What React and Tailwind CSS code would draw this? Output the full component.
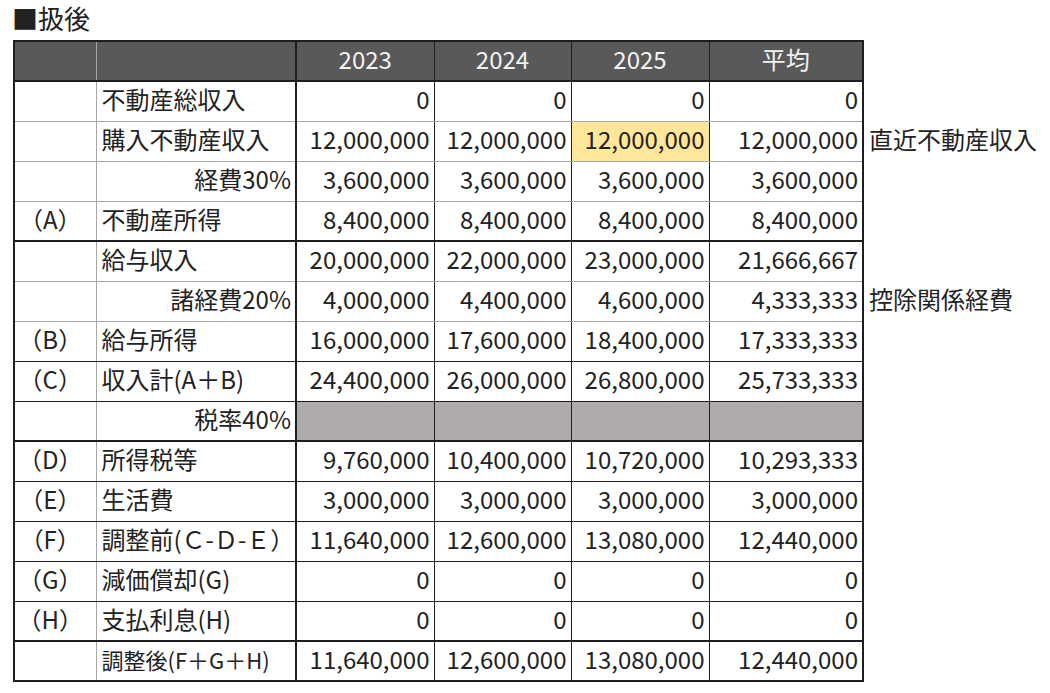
import React from "react";

const F = { fontFamily: '"Noto Sans CJK JP", "Noto Sans", sans-serif' };

const bottomCls = {
  gray: "border-b border-b-[#a6a6a6]",
  black: "border-b-[1.5px] border-b-[#1e1e1e]",
  thick: "border-b-2 border-b-[#1e1e1e]",
};

const rows = [
  { c0: "", label: "不動産総収入", vals: ["0", "0", "0", "0"], b: "gray" },
  { c0: "", label: "購入不動産収入", vals: ["12,000,000", "12,000,000", "12,000,000", "12,000,000"], hl: 2, note: "直近不動産収入", b: "gray" },
  { c0: "", label: "経費30%", right: true, vals: ["3,600,000", "3,600,000", "3,600,000", "3,600,000"], b: "gray" },
  { c0: "（A）", label: "不動産所得", vals: ["8,400,000", "8,400,000", "8,400,000", "8,400,000"], b: "thick" },
  { c0: "", label: "給与収入", vals: ["20,000,000", "22,000,000", "23,000,000", "21,666,667"], b: "gray" },
  { c0: "", label: "諸経費20%", right: true, vals: ["4,000,000", "4,400,000", "4,600,000", "4,333,333"], note: "控除関係経費", b: "gray" },
  { c0: "（B）", label: "給与所得", vals: ["16,000,000", "17,600,000", "18,400,000", "17,333,333"], b: "black" },
  { c0: "（C）", label: "収入計(A＋B)", vals: ["24,400,000", "26,000,000", "26,800,000", "25,733,333"], b: "black" },
  { c0: "", label: "税率40%", right: true, vals: ["", "", "", ""], gray: true, b: "thick" },
  { c0: "（D）", label: "所得税等", vals: ["9,760,000", "10,400,000", "10,720,000", "10,293,333"], b: "black" },
  { c0: "（E）", label: "生活費", vals: ["3,000,000", "3,000,000", "3,000,000", "3,000,000"], b: "black" },
  { c0: "（F）", label: "調整前(Ｃ-Ｄ-Ｅ）", vals: ["11,640,000", "12,600,000", "13,080,000", "12,440,000"], b: "black" },
  { c0: "（G）", label: "減価償却(G)", vals: ["0", "0", "0", "0"], b: "black" },
  { c0: "（H）", label: "支払利息(H)", vals: ["0", "0", "0", "0"], b: "thick" },
  { c0: "", label: "調整後(F＋G＋H)", small: true, vals: ["11,640,000", "12,600,000", "13,080,000", "12,440,000"], b: "thick" },
];

const yearRight = [
  "border-r-[1.5px] border-r-[#1e1e1e]",
  "border-r-[1.5px] border-r-[#1e1e1e]",
  "border-r-[1.5px] border-r-[#1e1e1e]",
  "border-r-2 border-r-[#1e1e1e]",
];

export default function App() {
  return (
    <div className="w-[1050px] h-[693px] bg-white text-[#222222] overflow-hidden" style={F}>
      <div className="h-[40px] pl-[12px] flex items-center text-[26px] leading-none pb-[4px]">■扱後</div>
      <div className="pl-[13px]">
        <table className="border-collapse table-fixed text-[24px] leading-none">
          <colgroup>
            <col className="w-[82px]" />
            <col className="w-[200px]" />
            <col className="w-[138px]" />
            <col className="w-[137px]" />
            <col className="w-[138px]" />
            <col className="w-[154px]" />
            <col className="w-[180px]" />
          </colgroup>
          <thead>
            <tr className="h-[40px]">
              <th className="bg-[#595959] border-t-2 border-t-[#1e1e1e] border-l-2 border-l-[#1e1e1e] border-r-[1.5px] border-r-[#a6a6a6] border-b-2 border-b-[#1e1e1e]"></th>
              <th className="bg-[#595959] border-t-2 border-t-[#1e1e1e] border-r-2 border-r-[#1e1e1e] border-b-2 border-b-[#1e1e1e]"></th>
              {["2023", "2024", "2025", "平均"].map((y, i) => (
                <th
                  key={y}
                  className={`bg-[#595959] text-[#f2f2f2] font-normal text-center pb-[4px] border-t-2 border-t-[#1e1e1e] border-b-2 border-b-[#1e1e1e] ${yearRight[i]}`}
                >
                  {y}
                </th>
              ))}
              <th></th>
            </tr>
          </thead>
          <tbody>
            {rows.map((r, ri) => (
              <tr key={ri} className="h-[40px]">
                <td className={`text-center pr-[10px] pb-[4px] border-l-2 border-l-[#1e1e1e] border-r-[1.5px] border-r-[#a6a6a6] ${bottomCls[r.b]}`}>
                  {r.c0}
                </td>
                <td
                  className={`border-r-2 border-r-[#1e1e1e] whitespace-nowrap pb-[4px] ${r.right ? "text-right pr-[4px]" : "text-left pl-[5px]"} ${r.small ? "text-[22px]" : ""} ${bottomCls[r.b]}`}
                >
                  {r.label}
                </td>
                {r.vals.map((v, vi) => (
                  <td
                    key={vi}
                    className={`text-right pr-[4px] pb-[4px] whitespace-nowrap ${r.gray ? "bg-[#aeaaaa]" : r.hl === vi ? "bg-[#ffe699]" : ""} ${yearRight[vi]} ${bottomCls[r.b]}`}
                  >
                    {v}
                  </td>
                ))}
                <td className="text-left pl-[5px] pb-[4px] whitespace-nowrap">{r.note || ""}</td>
              </tr>
            ))}
          </tbody>
        </table>
      </div>
    </div>
  );
}
